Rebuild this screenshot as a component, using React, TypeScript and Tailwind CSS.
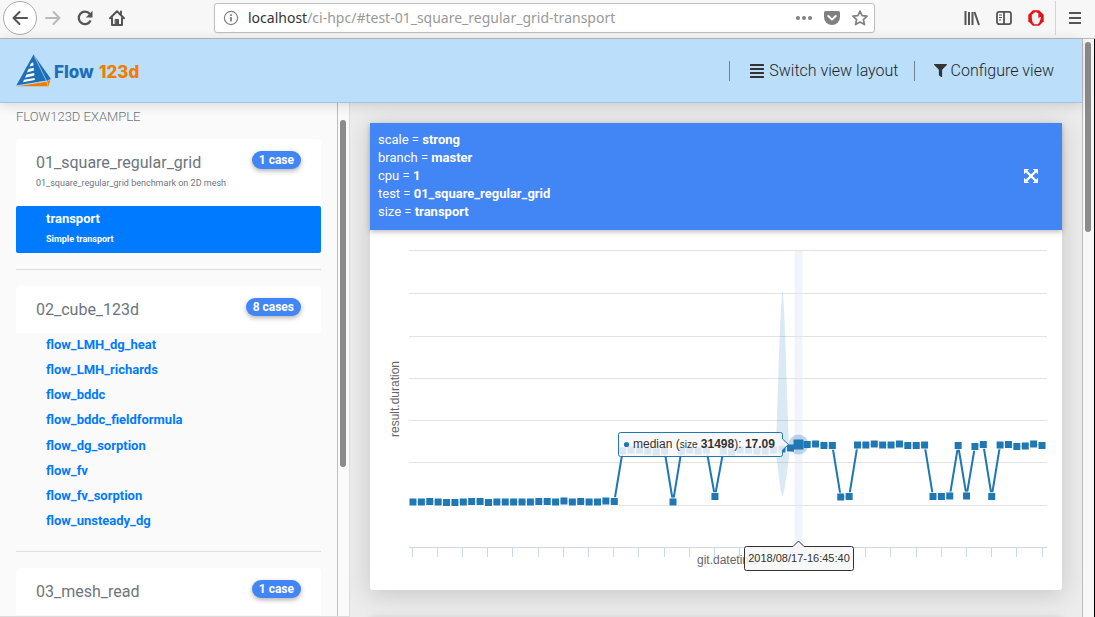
import React from 'react';
import { FaAlignJustify, FaFilter } from 'react-icons/fa';

const suites = [
  {
    name: '01_square_regular_grid',
    note: '01_square_regular_grid benchmark on 2D mesh',
    badge: '1 case',
    cases: [{ name: 'transport', note: 'Simple transport', active: true }],
  },
  {
    name: '02_cube_123d',
    badge: '8 cases',
    cases: [
      { name: 'flow_LMH_dg_heat' },
      { name: 'flow_LMH_richards' },
      { name: 'flow_bddc' },
      { name: 'flow_bddc_fieldformula' },
      { name: 'flow_dg_sorption' },
      { name: 'flow_fv' },
      { name: 'flow_fv_sorption' },
      { name: 'flow_unsteady_dg' },
    ],
  },
  { name: '03_mesh_read', badge: '1 case', cases: [] },
] as {
  name: string;
  note?: string;
  badge: string;
  cases: { name: string; note?: string; active?: boolean }[];
}[];

const filters = [
  ['scale', 'strong'],
  ['branch', 'master'],
  ['cpu', '1'],
  ['test', '01_square_regular_grid'],
  ['size', 'transport'],
];

// Vertical position of each commit's median within the plot.
const medians = [
  272, 272, 271.5, 272, 272.5, 272.5, 272, 271.5, 271.5, 272.5, 272, 272, 272, 272, 272, 271.5, 271.5,
  272, 271, 272, 271.5, 272, 272, 271, 271.5, 221, 220, 220, 221, 222, 221, 272, 221, 220, 221, 220,
  266.5, 221, 222, 220, 220, 221, 221, 220, 219, 218, 214.5, 214.5, 214, 215.5, 215.5, 267, 266.5,
  215, 215, 214, 215, 215, 214, 215.5, 215.5, 215, 266.5, 266.5, 266, 215.5, 266, 216.5, 214.5,
  266.5, 215, 214.5, 216.5, 216, 214, 215.5,
];
const px = (i: number) => 43 + i * 8.387;
const grid = [20.5, 63.5, 106.5, 148.5, 190.5, 232.5, 275.5];

function BrowserBar() {
  return (
    <div className="flex h-[39px] shrink-0 items-center border-b border-[#b9b9b9] bg-[#f7f7f7] pb-[3px] text-[#555]">
      <button aria-label="Back" className="ml-[3px] flex size-[34px] items-center justify-center rounded-full border border-[#aaa] bg-white">
        <svg width="16" height="16" viewBox="0 0 16 16" fill="none" stroke="currentColor" strokeWidth="2" strokeLinecap="round" strokeLinejoin="round">
          <path d="M15 8H1.5M7.5 2 1.5 8l6 6" />
        </svg>
      </button>
      <button aria-label="Forward" className="ml-2 text-[#b9b9b9]">
        <svg width="16" height="16" viewBox="0 0 16 16" fill="none" stroke="currentColor" strokeWidth="2" strokeLinecap="round" strokeLinejoin="round">
          <path d="M1 8h13.5M8.5 2l6 6-6 6" />
        </svg>
      </button>
      <button aria-label="Reload" className="ml-4">
        <svg width="16" height="16" viewBox="0 0 16 16" fill="none" stroke="currentColor" strokeWidth="2.3">
          <path d="M13.6 10.5A6.2 6.2 0 1 1 12.8 4" />
          <path d="M15.5.8v6.7H8.8z" fill="currentColor" stroke="none" />
        </svg>
      </button>
      <button aria-label="Home" className="ml-4">
        <svg width="16" height="16" viewBox="0 0 16 16" fill="none" stroke="currentColor" strokeWidth="2" strokeLinejoin="round" strokeLinecap="round">
          <path d="M1 8.2 8 1.3l7 6.9M3 8v7h10V8" />
          <path d="M6.500 9.500h3v4.500h-3z" fill="currentColor" strokeWidth="1" />
          <path d="M12 1.500v2.500" />
        </svg>
      </button>
      <div className="ml-[89px] flex h-[30px] w-[661px] items-center rounded-[3px] border border-[#c0c0c0] bg-white px-2 shadow-xs">
        <svg className="shrink-0 text-[#808080]" width="16" height="16" viewBox="0 0 16 16" fill="none" stroke="currentColor" strokeWidth="1.2">
          <circle cx="8" cy="8" r="6.6" />
          <path d="M8 7v4.5M8 4.2V6" strokeWidth="1.8" />
        </svg>
        <div className="ml-[9px] flex-1 whitespace-nowrap font-['Noto_Sans',sans-serif] text-[14px] text-[#999]">
          <span className="text-[#333]">localhost</span>/ci-hpc/#test-01_square_regular_grid-transport
        </div>
        <button aria-label="Page actions" className="text-[#808080]">
          <svg width="18" height="16" viewBox="0 0 18 16" fill="currentColor">
            <circle cx="3" cy="8" r="2" />
            <circle cx="9" cy="8" r="2" />
            <circle cx="15" cy="8" r="2" />
          </svg>
        </button>
        <button aria-label="Save to Pocket" className="ml-[11px] text-[#808080]">
          <svg width="16" height="16" viewBox="0 0 16 16">
            <path d="M1.6 1h12.8Q16 1 16 2.6V7a8 8 0 0 1-16 0V2.6Q0 1 1.6 1z" fill="currentColor" />
            <path d="m4.3 6 3.7 3.6L11.7 6" fill="none" stroke="#fff" strokeWidth="2" strokeLinecap="round" strokeLinejoin="round" />
          </svg>
        </button>
        <button aria-label="Bookmark" className="-mr-[2px] ml-3 text-[#808080]">
          <svg width="16" height="16" viewBox="0 0 16 16" fill="none" stroke="currentColor" strokeWidth="1.7" strokeLinejoin="round">
            <path d="m8 1.1 2.1 4.6 5 .5-3.7 3.4 1.1 5L8 12.1l-4.5 2.5 1.1-5L.9 6.2l5-.5z" />
          </svg>
        </button>
      </div>
      <div className="flex-1" />
      <button aria-label="Library">
        <svg width="16" height="16" viewBox="0 0 16 16" fill="none" stroke="currentColor" strokeWidth="2">
          <path d="M1.5 1v14M5 2v13M8.500 2v13M10.500 2l4.500 13" />
        </svg>
      </button>
      <button aria-label="Sidebars" className="ml-4">
        <svg width="16" height="16" viewBox="0 0 16 16" fill="none" stroke="currentColor" strokeWidth="1.8">
          <rect x="1" y="1.9" width="14" height="12.2" rx="2" />
          <path d="M8 2v12" />
          <path d="M3 5h3M3 7.5h3M3 10h2" strokeWidth="1" />
        </svg>
      </button>
      <button aria-label="Ad blocker" className="ml-4">
        <svg width="16" height="16" viewBox="0 0 16 16">
          <path d="M4.8.3h6.4l4.5 4.5v6.4l-4.5 4.5H4.800L.3 11.2V4.8z" fill="#e31414" />
          <path d="M3.800 8V4.5q.8-.9 1.500 0V3q.9-.9 1.700 0v-.8q.9-.8 1.700 0V3q.9-.7 1.700.2V8.5l1.500-1.500q1.400-.3 1 .8L11.300 12.500 9.800 14.300H6.200Q3.800 12 3.800 8z" fill="#f1f1f1" />
        </svg>
      </button>
      <div className="ml-[11px] h-[34px] w-px bg-[#d4d4d4]" />
      <button aria-label="Menu" className="mr-3 ml-3">
        <svg width="15" height="16" viewBox="0 0 15 16" stroke="currentColor" strokeWidth="2">
          <path d="M1 3h12M1 8h12M1 13h12" />
        </svg>
      </button>
    </div>
  );
}

function Logo() {
  return (
    <a href="#home" aria-label="Flow 123d" className="block">
      <svg width="126" height="36" viewBox="0 0 126 36">
        <path d="M17.5 1.5 0 33 31 27.5z" fill="#1d70b7" />
        <path d="M17.5 1.5 35 26 31 29.5z" fill="#1d70b7" />
        <path d="M1 33.2 31 28.5 34.5 26.5 32.5 33.2z" fill="#f07d00" />
        <path d="M18.5 3.5 31 29l.8 4" fill="none" stroke="#bbdefb" strokeWidth=".7" />
        <path d="M0 32.8 31.5 28 35 25.8" fill="none" stroke="#bbdefb" strokeWidth=".7" />
        <g fill="#fff">
          <path d="m15 10.5 2.2-1.200.3 3.200-4 1.100z" />
          <path d="m12.500 16 5.300-1.300.1 2.900-7 1.800z" />
          <path d="m10.500 21.500 7.700-1.400.2 2.500L9 24.700z" />
          <path d="m8 26.800 10.700-1.700.1 1.900L7 29.200z" />
        </g>
        <text x="38" y="25" fill="#1d70b7" fontSize="17" fontWeight="800" fontFamily="Inter, sans-serif">Flow</text>
        <text x="83" y="25" fill="#f07d00" fontSize="17" fontWeight="800" fontFamily="Inter, sans-serif">123d</text>
      </svg>
    </a>
  );
}

function Chart() {
  const line = medians.map((y, i) => `${i ? 'L' : 'M'}${px(i)} ${y}`).join('');
  return (
    <svg className="block h-auto w-full font-['Liberation_Sans',sans-serif]" viewBox="0 0 692 360" role="img" aria-label="result.duration by git.datetime">
      <rect x="424.5" y="20" width="8" height="297" fill="#ccd6eb" fillOpacity=".27" />
      {grid.map((y) => (
        <path key={y} d={`M39 ${y}H677`} stroke="#e3e3e3" />
      ))}
      <path d="M39 317.5H677" stroke="#ccd6eb" />
      {Array.from({ length: 26 }, (_, k) => (
        <path key={k} d={`M${Math.floor(42 + k * 25.2) + 0.5} 317V327`} stroke="#ccd6eb" />
      ))}
      <path d="M412.500 59C409.500 85 408 175 406 221C408.500 246 411 264 412.500 266.500C414 264 417 246 419.500 221C417 175 415.500 85 412.500 59Z" fill="#1f77b4" fillOpacity=".16" />
      <path d={line} fill="none" stroke="#1f77b4" strokeWidth="2" strokeLinejoin="round" />
      {medians.map((y, i) => (
        <rect key={i} x={px(i) - 3.5} y={y - 3.5} width="7" height="7" fill="#1f77b4" stroke="#fff" strokeOpacity=".75" strokeWidth="2" paintOrder="stroke" />
      ))}
      <circle cx="428.5" cy="214.5" r="10" fill="#1f77b4" fillOpacity=".28" />
      <rect x="423.5" y="209.5" width="10" height="10" fill="#1f77b4" />
      <text x="358" y="334" textAnchor="middle" fontSize="12" fill="#666">git.datetime</text>
      <text transform="translate(29 169) rotate(-90)" textAnchor="middle" fontSize="12" fill="#666">result.duration</text>
      <path d="M250.5 202.5H410.5Q412.5 202.5 412.5 204.5V209L418.5 214.5L412.5 220V224.5Q412.5 226.5 410.5 226.5H250.5Q248.5 226.5 248.5 224.5V204.5Q248.5 202.5 250.5 202.5Z" fill="#f7f7f7" fillOpacity=".87" stroke="#1f77b4" />
      <circle cx="256.5" cy="214.5" r="2.6" fill="#1f77b4" />
      <text x="263" y="218" fontSize="12" fill="#333">
        median (<tspan fontSize="10">size</tspan> <tspan fontWeight="700">31498</tspan>): <tspan fontWeight="700">17.09</tspan>
      </text>
      <path d="M376.5 316.5H423L428.5 311L434 316.5H481.5Q483.5 316.5 483.5 318.5V338.5Q483.5 340.5 481.5 340.5H376.5Q374.5 340.5 374.5 338.5V318.5Q374.5 316.5 376.5 316.5Z" fill="#f7f7f7" fillOpacity=".87" stroke="#333" />
      <text x="429" y="332" textAnchor="middle" fontSize="11" fill="#333">2018/08/17-16:45:40</text>
    </svg>
  );
}

function ResultCard() {
  return (
    <section className="shrink-0 rounded-[3px] bg-white shadow-[0_4px_26px_rgba(0,0,0,0.17)]">
      <div className="flex items-center bg-[#4285f4] px-2 pt-2 pb-[9px] text-[13px] leading-[18px] text-white shadow-[0_2px_5px_rgba(0,0,0,0.25)]">
        <div className="flex-1">
          {filters.map(([key, value]) => (
            <div key={key}>
              {key} = <b>{value}</b>
            </div>
          ))}
        </div>
        <button aria-label="Expand chart" className="mr-4">
          <svg width="14" height="14" viewBox="0 0 14 14" fill="currentColor">
            <path d="M0 0h5.200L0 5.200zM14 0v5.200L8.800 0zM0 14V8.800L5.200 14zM14 14H8.800L14 8.800z" />
            <path d="m2 2 10 10M12 2 2 12" stroke="currentColor" strokeWidth="2.400" />
          </svg>
        </button>
      </div>
      <Chart />
    </section>
  );
}

export default function App() {
  return (
    <div className="flex h-screen flex-col overflow-hidden font-['Roboto',sans-serif]">
      <BrowserBar />
      <div className="flex min-h-0 flex-1">
        <div className="flex min-w-0 flex-1 flex-col">
          <header className="z-10 flex h-16 shrink-0 items-center border-b border-[#a3c4e0] bg-[#bbdefb] pr-7 pl-4 shadow-[0_2px_12px_rgba(0,0,0,0.14)]">
            <Logo />
            <nav className="ml-auto flex items-center text-[16px] font-light text-[#212529]">
              <a href="#layout" className="flex h-5 items-center gap-1 border-l border-[#6f8596] pr-[15px] pl-[19px]">
                <FaAlignJustify size={16} className="text-[#333]" />
                Switch view layout
              </a>
              <a href="#configure" className="flex h-5 items-center gap-1 border-l border-[#6f8596] pl-[19px]">
                <FaFilter size={13} className="text-[#333]" />
                Configure view
              </a>
            </nav>
          </header>
          <div className="flex min-h-0 flex-1">
            <aside className="flex w-[350px] shrink-0 border-r border-b border-[#dcdcdc] bg-[#fafafa]">
              <div className="min-w-0 flex-1 overflow-hidden border-r border-[#bdbdbd] px-4">
                <h2 className="mt-1 mb-3 text-[13px] leading-5 font-light text-[#6c757d] uppercase">Flow123d Example</h2>
                {suites.map((s) => (
                  <div key={s.name} className="mb-4 border-b border-[#dedede] pb-4">
                    <div className={s.note ? 'rounded-t-sm bg-white px-5 pt-3 pb-4' : 'rounded-t-sm bg-white px-5 pt-3 pb-[11px]'}>
                      <div className="flex h-6 items-start justify-between">
                        <h3 className="text-[16px] leading-6 text-[#6c757d]">{s.name}</h3>
                        <span className="rounded-full bg-[#4285f4] px-[7px] pt-px text-[12px] leading-[17px] font-bold text-white shadow-[0_2px_5px_rgba(0,0,0,0.3)]">{s.badge}</span>
                      </div>
                      {s.note && <p className="pt-px text-[9px] leading-[14px] text-[#6c757d]">{s.note}</p>}
                    </div>
                    <div className={s.cases.length > 1 ? 'flex min-h-[202px] flex-col justify-between pb-[2px]' : ''}>
                      {s.cases.map((c) => (
                        <a
                          key={c.name}
                          href={`#${c.name}`}
                          className={
                            c.active
                              ? 'block h-[47px] rounded-[2px] bg-[#007bff] px-[30px] text-[13px] leading-[25px] font-bold text-white'
                              : 'block px-[30px] text-[13px] leading-6 font-bold text-[#007bff]'
                          }
                        >
                          {c.name}
                          {c.note && <span className="block text-[9px] leading-4">{c.note}</span>}
                        </a>
                      ))}
                    </div>
                  </div>
                ))}
              </div>
              <div className="w-[11px] pt-[17px] pl-[2px]">
                <div className="h-[347px] w-[6px] rounded-full bg-[#8b8b8b]" />
              </div>
            </aside>
            <main className="flex min-w-0 flex-1 flex-col gap-7 overflow-hidden bg-[#ececec] px-5 pt-5">
              <ResultCard />
              <section className="min-h-28 shrink-0 bg-[#4285f4] shadow-[0_2px_8px_rgba(0,0,0,0.25)]" />
            </main>
          </div>
        </div>
        <div className="w-[13px] border-r border-l border-r-black border-l-[#bdbdbd] bg-[#f7f7f7] pt-[3px] pl-[2px]">
          <div className="h-[190px] w-[6px] rounded-full bg-[#8b8b8b]" />
        </div>
      </div>
    </div>
  );
}
